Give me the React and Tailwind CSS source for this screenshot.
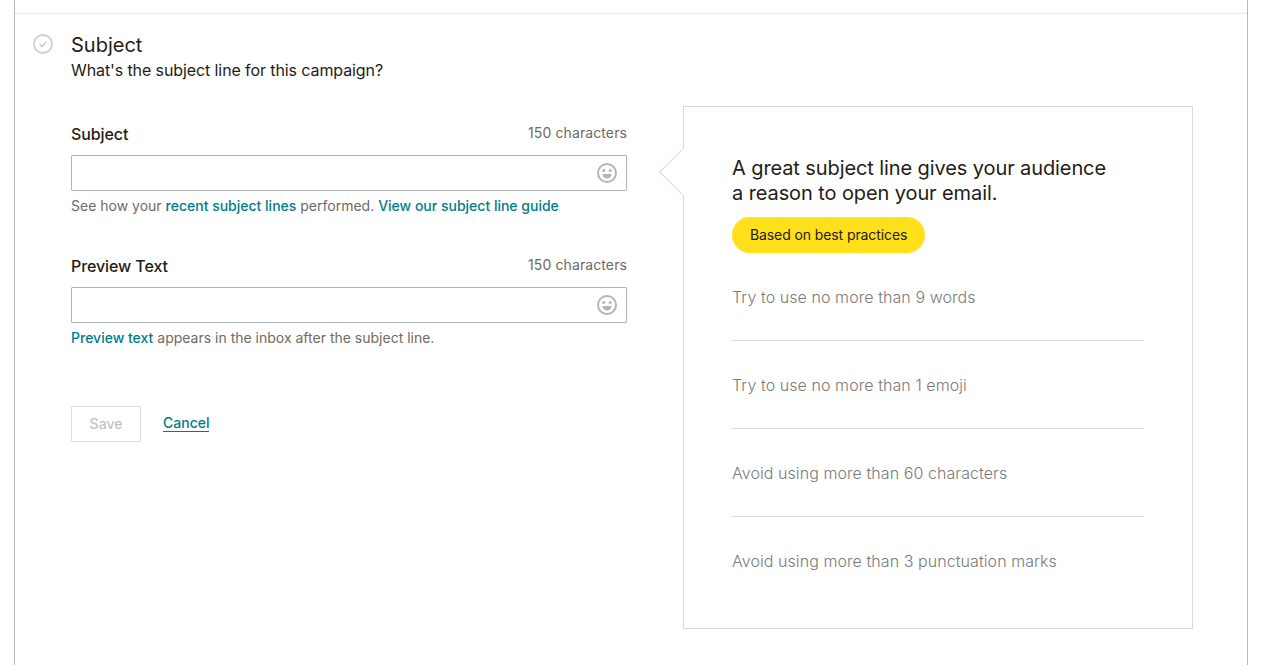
const fontStack = { fontFamily: 'Inter, "Liberation Sans", sans-serif' };

const SmileIcon = () => (
  <svg width="22" height="22" viewBox="0 0 22 22" fill="none" className="block">
    <circle cx="11" cy="11" r="9" stroke="#b4b4b4" strokeWidth="2" />
    <circle cx="7.8" cy="8.6" r="1.5" fill="#b4b4b4" />
    <circle cx="14.2" cy="8.6" r="1.5" fill="#b4b4b4" />
    <path d="M6.5 12h9c0 2.8-2 4.5-4.5 4.5S6.5 14.8 6.5 12z" fill="#b4b4b4" />
  </svg>
);

const CheckCircle = () => (
  <svg width="20" height="20" viewBox="0 0 20 20" fill="none" className="block">
    <circle cx="10" cy="10" r="9" stroke="#cfcfcf" strokeWidth="1.8" />
    <path d="M6.6 10.2l2.4 2.4 4.4-5" stroke="#c4c4c4" strokeWidth="1.4" />
  </svg>
);

const Field = ({ label, children, className }) => (
  <div className={className}>
    <div className="flex items-start justify-between h-[20px]">
      <label className="text-[16px] leading-[20px] tracking-[-0.1px] font-medium text-[#241c15]">{label}</label>
      <span className="text-[14px] leading-[17px] tracking-[0.1px] text-[#6f6a64]">150 characters</span>
    </div>
    <div className="mt-[11px] h-[36px] flex items-center justify-end pr-[8px] bg-white border border-[#b3b3b3] rounded-[1px]">
      <SmileIcon />
    </div>
    <p className="mt-[6px] text-[14px] leading-[18px] text-[#6f6a64] whitespace-nowrap">{children}</p>
  </div>
);

const tips = [
  'Try to use no more than 9 words',
  'Try to use no more than 1 emoji',
  'Avoid using more than 60 characters',
  'Avoid using more than 3 punctuation marks',
];

export default function App() {
  return (
    <div className="h-[665px] overflow-hidden bg-white" style={fontStack}>
      <div className="ml-[14px] w-[1234px] h-full border-x border-[#b9b9b9]">
        <div className="h-[14px] border-b border-dotted border-[#d9d9d9]" />
        <div className="flex pt-[20px] pl-[18px]">
          <div className="w-[38px] shrink-0">
            <CheckCircle />
          </div>
          <div>
            <h2 className="text-[20px] leading-[22px] text-[#241c15]">Subject</h2>
            <p className="mt-[3px] text-[16px] leading-[22px] tracking-[-0.1px] text-[#241c15]">
              What's the subject line for this campaign?
            </p>
          </div>
        </div>

        <div className="flex items-start pl-[56px] -mt-[1px]">
          <div className="w-[556px] pt-[44px] shrink-0">
            <Field label="Subject">
              See how your <a className="font-medium text-[#007c89]">recent subject lines</a> performed.{' '}
              <a className="font-medium text-[#007c89]">View our subject line guide</a>
            </Field>
            <Field label="Preview Text" className="mt-[41px]">
              <a className="font-medium text-[#007c89]">Preview text</a> appears in the inbox after the subject line.
            </Field>
            <div className="flex items-center mt-[59px]">
              <button className="w-[70px] h-[36px] pb-[1px] text-[14px] font-medium text-[#c2c2c2] border border-[#dcdcdc] rounded-[1px]">
                Save
              </button>
              <a className="ml-[22px] mb-[1px] text-[14px] leading-[16px] font-medium text-[#007c89] border-b border-[#007c89]">
                Cancel
              </a>
            </div>
          </div>

          <div className="relative ml-[56px] mt-[26px] w-[510px] h-[523px] border border-[#d9d9d9] px-[48px] pt-[49px] bg-white">
            <span className="absolute left-[-18px] top-[48px] w-[34px] h-[34px] rotate-45 bg-white border-l border-b border-[#d9d9d9]" />
            <p className="relative text-[20px] leading-[25px] tracking-[-0.1px] text-[#241c15] whitespace-nowrap">
              A great subject line gives your audience
              <br />
              a reason to open your email.
            </p>
            <span className="relative inline-flex items-center mt-[11px] h-[36px] px-[18px] pb-[1px] rounded-full bg-[#ffe01b] text-[14px] tracking-[-0.1px] text-[#241c15]">
              Based on best practices
            </span>
            <ul>
              {tips.map((tip, i) => (
                <li
                  key={tip}
                  className={`h-[88px] pt-[33px] text-[16px] font-light leading-[22px] tracking-[0.07px] text-[#7a7a7c] whitespace-nowrap ${i < 3 ? 'border-b border-[#dcdcdc]' : ''}`}
                >
                  {tip}
                </li>
              ))}
            </ul>
          </div>
        </div>
      </div>
    </div>
  );
}
